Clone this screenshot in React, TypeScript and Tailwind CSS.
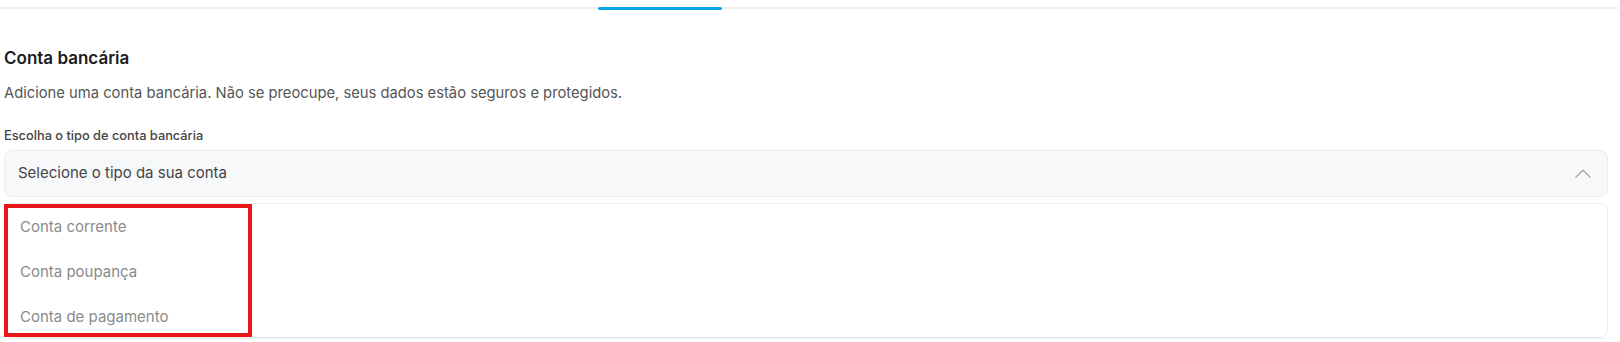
const options = ["Conta corrente", "Conta poupança", "Conta de pagamento"];

export default function App() {
  return (
    <main
      className="min-h-screen bg-white pr-[12px] pl-[4px]"
      style={{ fontFamily: "Inter, 'Noto Sans', sans-serif" }}
    >
      {/* tabs underline */}
      <div className="flex items-start pt-[7px] -ml-[4px] -mr-[10px]">
        <div className="w-[598px] h-[2px] bg-[#eeeeee]" />
        <div className="w-[124px] h-[3px] rounded-full bg-[#0aa2e6]" />
        <div className="flex-1 h-[2px] bg-[#eeeeee]" />
      </div>

      <h2 className="mt-[36px] text-[17px] leading-[24px] font-semibold text-[#1b1b1b]">
        Conta bancária
      </h2>
      <p className="mt-[13px] text-[14.75px] leading-[20px] text-[#555555]">
        Adicione uma conta bancária. Não se preocupe, seus dados estão seguros e protegidos.
      </p>

      <label className="block mt-[25px] text-[12.8px] leading-[16px] font-medium text-[#444444]">
        Escolha o tipo de conta bancária
      </label>

      <button className="mt-[6px] w-full h-[47px] flex items-center justify-between pl-[13px] pr-[16px] rounded-lg border border-[#ececec] bg-[#f7f8fa] text-[15px] text-[#444444]">
        <span>Selecione o tipo da sua conta</span>
        <svg width="16" height="9" viewBox="0 0 16 9" fill="none" className="text-[#a8a8a8]">
          <polyline points="1,8 8,1.2 15,8" stroke="currentColor" strokeWidth="1.4" strokeLinecap="round" strokeLinejoin="round" />
        </svg>
      </button>

      <div className="mt-[6px] h-[135px] rounded-lg border border-[#ececec] bg-white">
        <ul className="-ml-[1px] w-[248px] h-[133px] border-[4px] border-[#e8151b] pt-[7px] flex flex-col gap-[21px]">
          {options.map((o) => (
            <li key={o} className="h-[24px] flex items-center pl-[12px] text-[15px] text-[#8a8a8a]">
              {o}
            </li>
          ))}
        </ul>
      </div>
      <div className="h-[4px] border-t border-[#f1f1f1]" />
    </main>
  );
}
